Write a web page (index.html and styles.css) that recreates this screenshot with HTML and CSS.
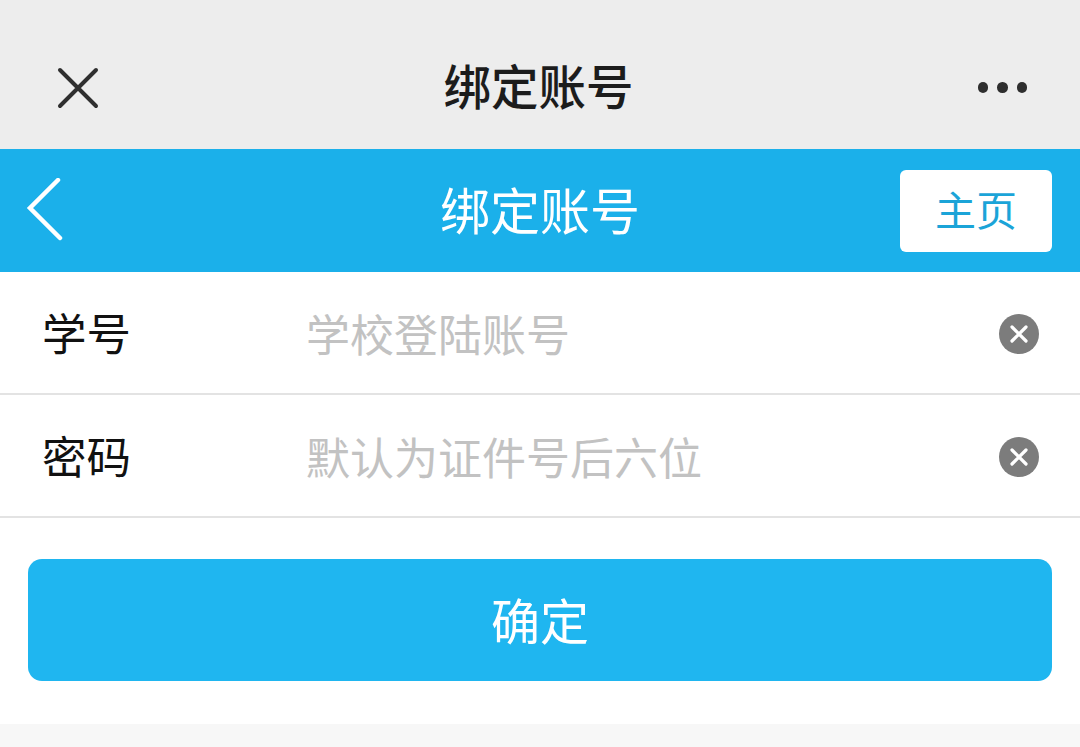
FILE: index.html
```html
<!DOCTYPE html>
<html lang="zh-CN">
<head>
<meta charset="utf-8">
<title>绑定账号</title>
<link rel="stylesheet" href="styles.css">
</head>
<body>
<div class="page">
  <header class="wx-bar">
    <svg class="wx-close" width="44" height="44" viewBox="0 0 44 44"><path d="M4 4L40 40M40 4L4 40" /></svg>
    <h1 class="wx-title">绑定账号</h1>
    <div class="wx-more"><span></span><span></span><span></span></div>
  </header>
  <nav class="app-bar">
    <svg class="back" width="40" height="66" viewBox="0 0 40 66"><path d="M34 2L6 30L36 60" /></svg>
    <div class="app-title">绑定账号</div>
    <a class="home">主页</a>
  </nav>
  <section class="form">
    <div class="row">
      <label class="label">学号</label>
      <div class="placeholder">学校登陆账号</div>
      <svg class="clear" width="42" height="42" viewBox="0 0 42 42"><circle cx="21" cy="21" r="20"/><path d="M14 14L28 28M28 14L14 28"/></svg>
    </div>
    <div class="row">
      <label class="label">密码</label>
      <div class="placeholder">默认为证件号后六位</div>
      <svg class="clear" width="42" height="42" viewBox="0 0 42 42"><circle cx="21" cy="21" r="20"/><path d="M14 14L28 28M28 14L14 28"/></svg>
    </div>
  </section>
  <div class="actions"><button class="confirm">确定</button></div>
  <div class="rest"></div>
</div>
</body>
</html>
```
FILE: styles.css
```css
* { box-sizing: border-box; }
html, body { margin: 0; padding: 0; }
body { width: 1080px; height: 747px; overflow: hidden; background: #fff; font-family: "Noto Sans CJK SC", "Noto Sans", sans-serif; }
.page { display: flex; flex-direction: column; height: 747px; }

.wx-bar { height: 149px; flex: none; background: #ededed; display: flex; align-items: center; justify-content: space-between; padding: 50px 53px 24px 56px; position: relative; }
.wx-close path { stroke: #2f2f2f; stroke-width: 4; stroke-linecap: round; fill: none; }
.wx-title { position: absolute; left: 0; right: 0; top: 0; height: 149px; margin: 0; padding: 20px 3px 0 0; display: flex; align-items: center; justify-content: center; font-size: 47.5px; font-weight: 500; color: #1c1c1c; line-height: 1; }
.wx-more { display: flex; gap: 9px; }
.wx-more span { width: 10.5px; height: 10.5px; border-radius: 50%; background: #2e2e2e; }

.app-bar { height: 123px; flex: none; background: #1bb0ea; display: flex; align-items: center; justify-content: space-between; padding: 0 28px 0 24px; position: relative; }
.back path { stroke: #fff; stroke-width: 4.5; stroke-linecap: round; stroke-linejoin: miter; fill: none; }
.app-title { position: absolute; left: 0; right: 0; top: 0; bottom: 0; padding-bottom: 6px; display: flex; align-items: center; justify-content: center; font-size: 50px; color: #fff; line-height: 1; }
.home { position: relative; width: 152px; height: 82px; background: #fff; border-radius: 6px; padding-bottom: 5px; color: #1ba4d8; font-size: 41px; display: flex; align-items: center; justify-content: center; line-height: 1; }

.form { flex: none; }
.row { height: 123px; border-bottom: 2px solid #e3e3e3; display: flex; align-items: center; padding: 0 40px 0 42px; }
.label { width: 264px; flex: none; font-size: 44.5px; color: #111; line-height: 1; }
.placeholder { flex: 1; font-size: 44px; color: #c2c2c2; line-height: 1; }
.clear { margin-top: 2px; }
.clear circle { fill: #7c7c7c; }
.clear path { stroke: #fff; stroke-width: 3.2; stroke-linecap: round; fill: none; }

.actions { flex: none; padding: 41px 28px 43px; }
.confirm { display: block; width: 100%; height: 122px; border: 0; border-radius: 14px; background: #1fb6f0; color: #fff; font-family: inherit; font-size: 49px; line-height: 1; padding: 0 0 4px; }
.rest { flex: 1; background: #f7f7f7; }
```
